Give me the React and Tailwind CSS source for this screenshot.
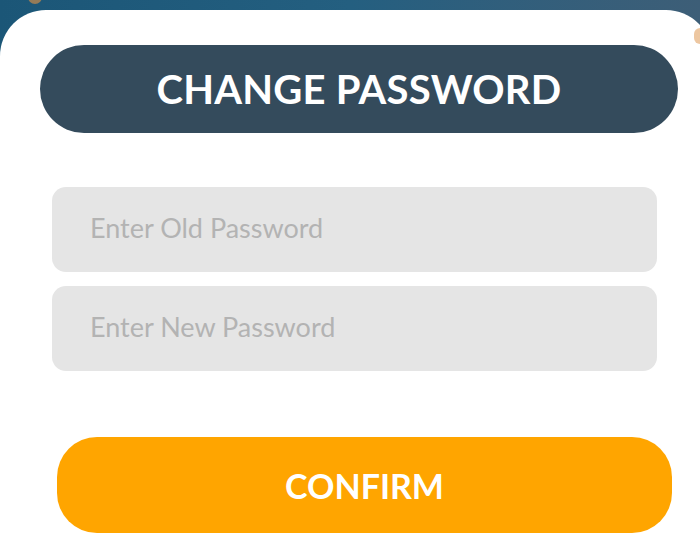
import React from 'react';

const App = () => {
    return (
        <div className="relative h-[554px] w-[700px] overflow-hidden bg-gradient-to-r from-[#1b5677] via-[#245f80] to-[#3d5e77] font-['Lato',sans-serif]">
            {/* small decorative blobs peeking from the background */}
            <div className="absolute left-[28px] top-[-10px] h-[14px] w-[14px] rounded-full bg-[#c98a4a] opacity-70" />
            <div className="absolute right-[-6px] top-[28px] h-[16px] w-[12px] rounded-full bg-[#e8b98a] opacity-80" />

            <div className="mt-[10px] h-[560px] w-[712px] rounded-t-[46px] bg-white pt-[35px]">
                <div className="ml-[40px] flex h-[88px] w-[638px] items-center justify-center rounded-[44px] bg-[#344b5c]">
                    <span className="text-[40px] font-bold tracking-[0.2px] text-white">CHANGE PASSWORD</span>
                </div>

                <div className="ml-[52px] mt-[54px] flex w-[605px] flex-col gap-[14px]">
                    <input
                        type="password"
                        placeholder="Enter Old Password"
                        className="h-[85px] rounded-[14px] bg-[#e5e5e5] px-[38px] pb-[4px] text-[27px] outline-none placeholder:text-[#b3b3b3]"
                    />
                    <input
                        type="password"
                        placeholder="Enter New Password"
                        className="h-[85px] rounded-[14px] bg-[#e5e5e5] px-[38px] pb-[4px] text-[27px] outline-none placeholder:text-[#b3b3b3]"
                    />
                </div>

                <button className="ml-[57px] mt-[66px] flex h-[96px] w-[615px] items-center justify-center rounded-[40px] bg-[#ffa500] text-[34px] font-bold text-white">
                    CONFIRM
                </button>
            </div>
        </div>
    );
};

export default App;
